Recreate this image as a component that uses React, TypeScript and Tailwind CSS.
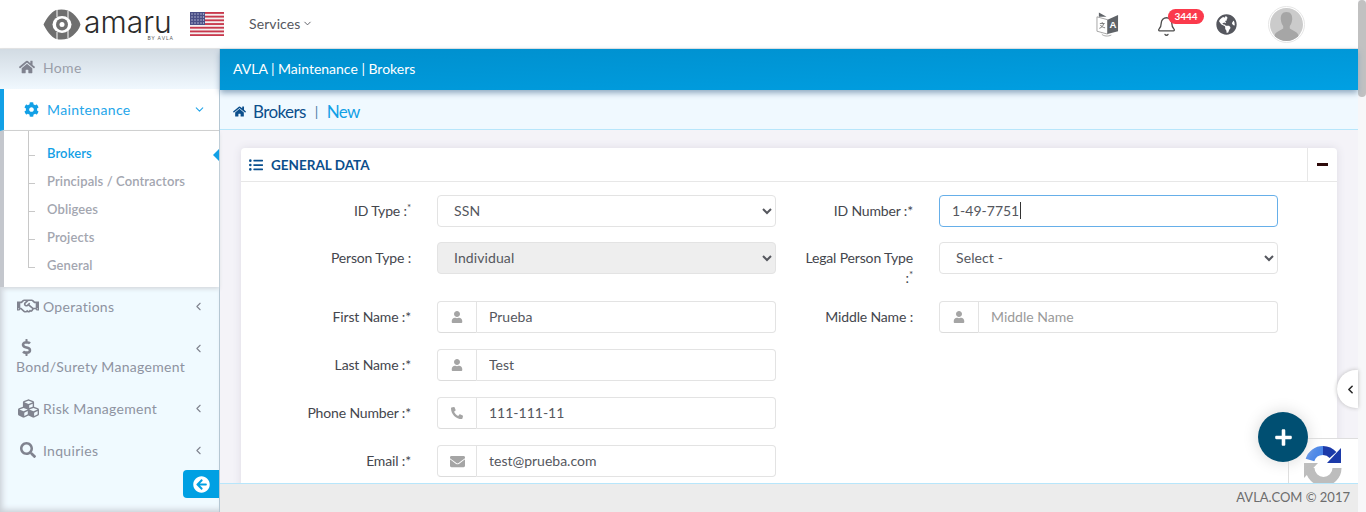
import type { ReactNode } from "react";
import { Bell, ChevronDown, ChevronLeft } from "lucide-react";
import {
  FaArrowCircleLeft,
  FaCog,
  FaCubes,
  FaDollarSign,
  FaEnvelope,
  FaGlobeAmericas,
  FaHome,
  FaListUl,
  FaPhone,
  FaPlus,
  FaRegHandshake,
  FaSearch,
  FaUser,
} from "react-icons/fa";

const font = "font-['Lato','Noto_Sans',sans-serif]";

function AmaruMark() {
  return (
    <svg width="38" height="31" viewBox="0 0 38 31" className="shrink-0">
      <path d="M13 1C20 -0.500 26 1 30 4.500C33.500 7.500 36.500 11.500 37.500 15.500C36.500 19.500 33.500 23.500 30 26.500C26 30 20 31.500 13 30C8 28 3.500 21.500 0.500 15.500C3.500 9.500 8 3 13 1Z" fill="#6f6f6f" />
      <ellipse cx="19" cy="15.500" rx="9.500" ry="8.500" fill="#fff" />
      <circle cx="19" cy="15.500" r="6" fill="#6f6f6f" />
      <circle cx="19" cy="15.500" r="2.500" fill="#fff" />
      <path d="M14 0V8M14 23V31M25 2V9M25 22V29" stroke="#fff" strokeWidth="1" />
    </svg>
  );
}

function UsFlag() {
  const stripes = [0, 1, 2, 3, 4, 5, 6];
  return (
    <svg width="34" height="24" viewBox="0 0 34 24" className="shrink-0">
      <rect width="34" height="24" fill="#f4f0f0" rx="1" />
      {stripes.map((s) => (
        <rect key={s} y={s * 3.7} width="34" height="1.85" fill="#c8384c" />
      ))}
      <rect width="15" height="13" fill="#4a4f86" />
      {[2, 5, 8, 11].map((y) =>
        [2, 5, 8, 11, 13.5].map((x) => <circle key={`${x}-${y}`} cx={x} cy={y} r="0.7" fill="#c9cce2" />),
      )}
    </svg>
  );
}

function TranslateIcon() {
  return (
    <svg width="23" height="25" viewBox="0 0 24 26" className="shrink-0">
      <path d="M1 5L12 8V23L1 20Z" fill="#fff" stroke="#8d8d8d" strokeWidth="0.8" />
      <path d="M12 8L23 3V20L12 23Z" fill="#5f6368" />
      <path d="M3 0.500L11 5H3Z" fill="#5f6368" />
      <path d="M4 12H9M6.500 10.500V12M8 12C7.500 14.500 6 16 3.500 17M4.500 13.500C5.500 15 7 16 9.500 16.500" stroke="#6f6f6f" strokeWidth="0.9" fill="none" />
      <text x="14" y="17" fontSize="10" fontWeight="700" fill="#fff" fontFamily="Liberation Sans, sans-serif">A</text>
      <path d="M6 23C8 25.500 13 25.500 16 24" stroke="#8d8d8d" strokeWidth="0.8" fill="none" />
    </svg>
  );
}

function Avatar() {
  return (
    <div className="flex h-[37px] w-[37px] items-center justify-center overflow-hidden rounded-full border border-[#e6e6e6] bg-white">
      <svg width="33" height="33" viewBox="0 0 33 33" className="rounded-full">
        <rect width="33" height="33" fill="#cbcbcb" />
        <path d="M16.500 4C12 4 10.500 7.500 10.800 11.500C11 14 12 16.500 13.200 18V20.500C10 23 5.500 23.500 4.500 27.500V33H28.500V27.500C27.500 23.500 23 23 19.800 20.500V18C21 16.500 22 14 22.200 11.500C22.500 7.500 21 4 16.500 4Z" fill="#a6a6a6" />
      </svg>
    </div>
  );
}

function Recaptcha() {
  return (
    <svg width="38" height="38" viewBox="0 0 38 38" fill="none">
      <path d="M19 5.500A13.500 13.500 0 0 0 6 15" stroke="#4a86e8" strokeWidth="9" />
      <path d="M19 5.500A13.500 13.500 0 0 1 29 10" stroke="#1c3aa9" strokeWidth="9" />
      <path d="M37 3V18H23Z" fill="#1c3aa9" />
      <path d="M6 23A13.500 13.500 0 0 0 33 23" stroke="#bdbdbd" strokeWidth="9" />
      <path d="M0 18H14L0 33Z" fill="#bdbdbd" />
    </svg>
  );
}

function NavItem({ icon, label }: { icon: ReactNode; label: string }) {
  return (
    <div className="flex h-[42px] items-center pl-4 pr-[14px] text-[#8e93a1]">
      <span className="flex w-[27px] shrink-0 justify-center pr-[3px] text-[#80838f]">{icon}</span>
      <span className="flex-1 text-[14px] tracking-[0.3px]">{label}</span>
      <ChevronLeft size={13} strokeWidth={2} className="text-[#80838f]" />
    </div>
  );
}

function SubItem({ label, active }: { label: string; active?: boolean }) {
  return (
    <div className="relative flex h-[28px] items-center pl-[43px]">
      <span className="absolute left-[24px] top-[15px] h-px w-[7px] bg-[#c8c8c8]" />
      <span className={active ? "text-[13px] font-semibold tracking-[0.1px] text-[#12a0e6]" : "text-[13px] font-semibold tracking-[0.1px] text-[#a3a6b0]"}>{label}</span>
      {active && <span className="absolute right-0 top-[9px] h-0 w-0 border-y-[6px] border-r-[6px] border-y-transparent border-r-[#12a0e6]" />}
    </div>
  );
}

function Sidebar() {
  return (
    <aside className="relative flex h-[463px] w-[220px] shrink-0 flex-col border-r border-[#b5c7d3] bg-[#f0faff] shadow-[inset_6px_0_6px_-4px_#c9ced5,inset_0_-6px_6px_-4px_#c9ced5]">
      <div className="flex h-[40px] items-center bg-gradient-to-b from-[#d2dbe3] to-[#f0f8fe] pb-[4px] pl-[19px] text-[14px] tracking-[0.35px] text-[#9a9ea9] shadow-[0_2px_4px_#c3c8cf]">
        <FaHome size={16} className="mr-2 text-[#80838f]" />
        Home
      </div>
      <div className="flex h-[42px] items-center border-b border-[#cfcfcf] border-l-[4px] border-l-[#12a0e6] bg-white pl-[20px] pr-[13px] text-[#24a6ea]">
        <FaCog size={15} className="mr-2 text-[#12a0e6]" />
        <span className="flex-1 text-[14px] tracking-[0.35px]">Maintenance</span>
        <ChevronDown size={13} strokeWidth={2} />
      </div>
      <div className="relative border-l-[4px] border-l-[#c4c7cd] bg-white pb-[7px] pt-[9px] shadow-[0_2px_4px_#d4d8dd]">
        <span className="absolute left-[24px] top-0 h-[137px] w-px bg-[#c8c8c8]" />
        <SubItem label="Brokers" active />
        <SubItem label="Principals / Contractors" />
        <SubItem label="Obligees" />
        <SubItem label="Projects" />
        <SubItem label="General" />
      </div>
      <div className="mt-[-2px]">
        <NavItem icon={<FaRegHandshake size={22} />} label="Operations" />
      </div>
      <div className="relative mt-[12px] h-[52px] pl-4 pr-4 text-[#8e93a1]">
        <FaDollarSign size={17} className="ml-[2px] text-[#80838f]" />
        <div className="whitespace-nowrap text-[14px] tracking-[0.3px]">Bond/Surety Management</div>
        <ChevronLeft size={13} strokeWidth={2} className="absolute right-[14px] top-[3px] text-[#80838f]" />
      </div>
      <div className="mt-[-4px]">
        <NavItem icon={<FaCubes size={21} />} label="Risk Management" />
      </div>
      <NavItem icon={<FaSearch size={16} />} label="Inquiries" />
      <button className="absolute right-0 top-[421px] flex h-[28px] w-[36px] items-center justify-center rounded-l-[4px] bg-[#00a0e3] text-white">
        <FaArrowCircleLeft size={17} />
      </button>
    </aside>
  );
}

function Label({ children }: { children: ReactNode }) {
  return <div className="w-[137px] shrink-0 text-right text-[14px] leading-[20px] tracking-[-0.15px] text-[#44464d]">{children}</div>;
}

function Field({ label, children }: { label: ReactNode; children: ReactNode }) {
  return (
    <div className="flex w-[502px] items-start gap-[26px]">
      <div className="pt-[6px]">
        <Label>{label}</Label>
      </div>
      <div className="w-[339px]">{children}</div>
    </div>
  );
}

function IconInput({ icon, value, placeholder }: { icon: ReactNode; value?: string; placeholder?: string }) {
  return (
    <div className="flex h-[32px]">
      <span className="flex w-[40px] items-center justify-center rounded-l-[4px] border border-[#e3e3e3] border-b-[#dcdcdc] bg-white text-[#a5a5a5]">{icon}</span>
      <input
        readOnly
        value={value}
        placeholder={placeholder}
        className="h-full min-w-0 flex-1 rounded-r-[4px] border border-l-0 border-[#e3e3e3] bg-white px-3 pb-[2px] text-[14px] text-[#55575e] outline-none placeholder:text-[#9a9a9a]"
      />
    </div>
  );
}

function SelectBox({ value, disabled }: { value: string; disabled?: boolean }) {
  return (
    <select
      disabled={disabled}
      defaultValue={value}
      className={
        disabled
          ? "h-[32px] w-full rounded-[4px] border border-[#e3e3e3] bg-[#eeeeee] px-3 pb-[2px] text-[14px] tracking-[0.1px] text-[#55575e] opacity-100 outline-none"
          : "h-[32px] w-full rounded-[4px] border border-[#e3e3e3] bg-white px-3 pb-[2px] text-[14px] tracking-[0.1px] text-[#55575e] outline-none"
      }
    >
      <option>{value}</option>
    </select>
  );
}

function GeneralData() {
  return (
    <section className="mx-[21px] mt-[18px] rounded-[4px] bg-white shadow-[0_0_8px_#dddbe4]">
      <div className="flex h-[34px] items-center border-b border-[#e7e7e7] pl-2">
        <FaListUl size={14} className="mr-[8px] text-[#084f8f]" />
        <span className="flex-1 pt-[2px] text-[13.500px] font-bold text-[#0c4f8c]">GENERAL DATA</span>
        <span className="flex h-[33px] w-[30px] items-center justify-center border-l border-[#e7e7e7]">
          <span className="h-[3px] w-[11px] bg-[#2d0a0a]" />
        </span>
      </div>
      <div className="h-[400px] pl-[33px] pt-[13px]">
        <div className="mb-[15px] flex">
          <Field label={<>ID Type :<sup className="text-[10px]">*</sup></>}>
            <SelectBox value="SSN" />
          </Field>
          <Field label="ID Number :*">
            <div className="flex h-[32px] items-center rounded-[4px] border border-[#66afe9] bg-white px-3 pb-px text-[14px] text-[#55575e]">
              1-49-7751<span className="ml-px h-[17px] w-px bg-[#333]" />
            </div>
          </Field>
        </div>
        <div className="mb-[27px] flex h-[32px]">
          <Field label="Person Type :">
            <SelectBox value="Individual" disabled />
          </Field>
          <Field label={<>Legal Person Type<br /><span>:<sup className="text-[10px]">*</sup></span></>}>
            <SelectBox value="Select -" />
          </Field>
        </div>
        <div className="mb-[16px] flex">
          <Field label="First Name :*">
            <IconInput icon={<FaUser size={12} />} value="Prueba" />
          </Field>
          <Field label="Middle Name :">
            <IconInput icon={<FaUser size={12} />} placeholder="Middle Name" />
          </Field>
        </div>
        <div className="mb-[16px]">
          <Field label="Last Name :*">
            <IconInput icon={<FaUser size={12} />} value="Test" />
          </Field>
        </div>
        <div className="mb-[16px]">
          <Field label="Phone Number :*">
            <IconInput icon={<FaPhone size={12} className="-scale-x-100" />} value="111-111-11" />
          </Field>
        </div>
        <Field label="Email :*">
          <IconInput icon={<FaEnvelope size={15} />} value="test@prueba.com" />
        </Field>
      </div>
    </section>
  );
}

export default function App() {
  return (
    <div className={`${font} relative flex h-[512px] w-[1366px] overflow-hidden bg-[#f4f3f8]`}>
      <div className="flex w-[1358px] flex-col">
        <header className="flex h-[49px] shrink-0 items-center border-b border-[#e6e6e6] bg-white">
          <div className="ml-[43px] flex items-center">
            <AmaruMark />
            <div className="ml-[3px] flex w-[90px] flex-col items-end pt-[2px]">
              <span className="block w-full font-['Inter',sans-serif] text-[30px] font-light leading-[26px] text-[#2c2c2c]">amaru</span>
              <span className="mt-[1px] text-[5px] leading-[5px] tracking-[1px] text-[#555]">BY AVLA</span>
            </div>
          </div>
          <div className="ml-[16px]">
            <UsFlag />
          </div>
          <div className="mb-px ml-[25px] flex items-center text-[14px] tracking-[0.1px] text-[#55575e]">
            Services
            <ChevronDown size={11} className="ml-[2px]" />
          </div>
          <div className="ml-auto flex items-center">
            <TranslateIcon />
            <div className="relative ml-[37px] mt-[5px]">
              <Bell size={21} strokeWidth={1.5} className="text-[#4d4d4d]" />
              <span className="absolute left-[12px] top-[-7px] flex h-[15px] w-[36px] items-center justify-center rounded-full bg-[#fb3a4c] text-[10px] font-bold text-white">3444</span>
            </div>
            <FaGlobeAmericas size={21} className="ml-[39px] text-[#55575e]" />
            <div className="ml-[31px] mr-[53px]">
              <Avatar />
            </div>
          </div>
        </header>
        <div className="flex min-h-0 flex-1">
          <Sidebar />
          <main className="relative flex min-w-0 flex-1 flex-col">
            <div className="relative z-10 flex h-[41px] shrink-0 items-center bg-gradient-to-br from-[#008fcd] to-[#00a0e3] pb-[2px] pl-[13px] text-[14px] text-white shadow-[0_3px_6px_#8fa9c0]">
              AVLA | Maintenance | Brokers
            </div>
            <div className="flex h-[40px] shrink-0 items-center border-b border-[#b7e6fb] bg-[#f0f9ff] pl-[13px] pt-[4px] text-[17px] tracking-[-0.6px]">
              <FaHome size={13} className="mr-[7px] text-[#0c4f8c]" />
              <span className="text-[#0c4f8c]">Brokers</span>
              <span className="mx-[9px] text-[14px] text-[#4d7fa5]">|</span>
              <span className="text-[#12a0e6]">New</span>
            </div>
            <div className="min-h-0 flex-1 overflow-hidden">
              <GeneralData />
            </div>
            <footer className="flex h-[29px] shrink-0 items-center justify-end border-t border-[#b7e6fb] bg-[#ececec] pr-[8px] text-[13px] text-[#6d6d6d]">
              AVLA.COM © 2017
            </footer>
            <div className="absolute right-0 top-[321px] flex h-[38px] w-[21px] items-center justify-end rounded-l-full bg-white pr-px shadow-[0_0_4px_#bbb]">
              <ChevronLeft size={13} strokeWidth={3} className="text-[#2b2b2b]" />
            </div>
            <div className="absolute right-0 top-[389px] flex h-[45px] w-[70px] justify-start overflow-hidden border-l border-t border-[#dedede] bg-white pl-[15px] pt-[6px]">
              <Recaptcha />
            </div>
            <button className="absolute right-[50px] top-[363px] flex h-[50px] w-[50px] items-center justify-center rounded-full bg-[#004f72] text-white shadow-[0_0_16px_#d8d8d8]">
              <FaPlus size={19} />
            </button>
          </main>
        </div>
      </div>
      <div className="w-[8px] shrink-0 bg-[#f7f7f9]">
        <div className="h-[97px] rounded-[4px] bg-[#c1c1c1]" />
      </div>
    </div>
  );
}
